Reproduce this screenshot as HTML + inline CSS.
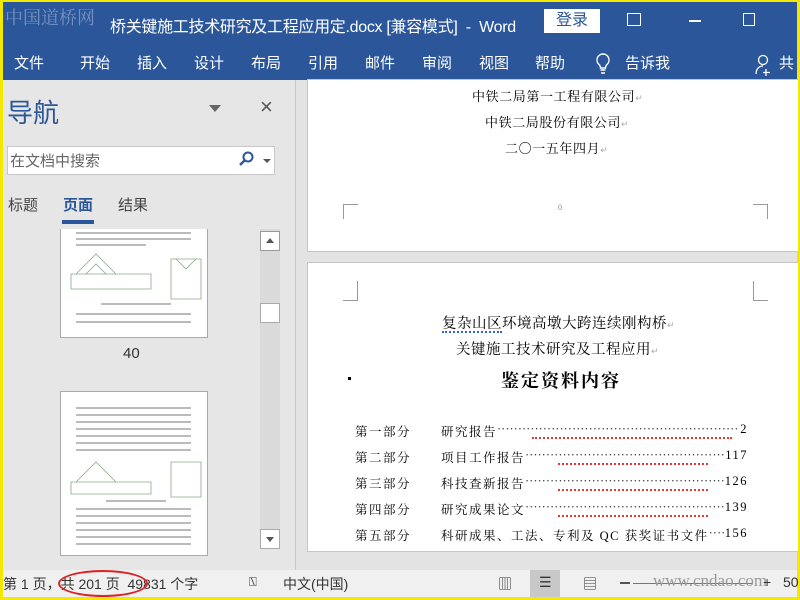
<!DOCTYPE html>
<html><head><meta charset="utf-8"><style>
*{margin:0;padding:0;box-sizing:border-box}
body{width:800px;height:600px;overflow:hidden;background:#f5e800;font-family:"Liberation Sans","Noto Sans CJK SC",sans-serif;position:relative}
.abs{position:absolute}
#title{left:3px;top:2px;width:794px;height:78px;background:#2b579a;color:#fff}
.t{position:absolute;font-size:17px;white-space:nowrap}
.nav{left:3px;top:80px;width:292px;height:490px;background:#e6e6e6}
.doc{left:295px;top:80px;width:502px;height:490px;background:#e3e3e3;border-left:1px solid #c8c8c8}
.page{position:absolute;background:#fff;left:11px;width:491px;border:1px solid #c6c6c6;border-right:none}
.serif{font-family:"Liberation Serif","Noto Serif CJK SC",serif;color:#000;position:absolute;white-space:nowrap;font-size:13px}
.status{left:3px;top:570px;width:794px;height:27px;background:#f0f0f0;font-size:14px;color:#333}
.st{position:absolute;top:4px;white-space:nowrap}
.wave{position:absolute;height:3px;border-bottom:2px dotted #e33}
.row{position:absolute;left:47px;width:393px;display:flex;font-family:"Liberation Serif","Noto Serif CJK SC",serif;font-size:12.5px;white-space:nowrap;letter-spacing:1.5px}
.row .a{width:86px}
.row .d{flex:1;overflow:hidden;letter-spacing:0;color:#333}
</style></head><body>
<div id="title" class="abs">
 <div class="t" style="left:2px;top:2px;color:#8aa0c8;font-size:18px;font-family:'Noto Serif CJK SC',serif;opacity:.8">中国道桥网</div>
 <div class="t" style="left:107px;top:11px;font-size:16px;letter-spacing:-.3px">桥关键施工技术研究及工程应用定.docx [兼容模式]&nbsp; - &nbsp;Word</div>
 <div class="abs" style="left:541px;top:7px;width:56px;height:24px;background:#fff;color:#2b579a;font-size:16px;text-align:center;line-height:24px">登录</div>
 <div class="abs" style="left:624px;top:11px;width:14px;height:13px;border:1.5px solid #fff"></div>
 <div class="abs" style="left:686px;top:18px;width:12px;height:1.5px;background:#fff"></div>
 <div class="abs" style="left:740px;top:11px;width:12px;height:13px;border:1.5px solid #fff"></div>
 <div class="t" style="left:11px;top:50px;font-size:15px">文件</div>
 <div class="t" style="left:77px;top:50px;font-size:15px">开始</div>
 <div class="t" style="left:134px;top:50px;font-size:15px">插入</div>
 <div class="t" style="left:191px;top:50px;font-size:15px">设计</div>
 <div class="t" style="left:248px;top:50px;font-size:15px">布局</div>
 <div class="t" style="left:305px;top:50px;font-size:15px">引用</div>
 <div class="t" style="left:362px;top:50px;font-size:15px">邮件</div>
 <div class="t" style="left:419px;top:50px;font-size:15px">审阅</div>
 <div class="t" style="left:476px;top:50px;font-size:15px">视图</div>
 <div class="t" style="left:532px;top:50px;font-size:15px">帮助</div>
 <svg class="abs" style="left:592px;top:50px" width="16" height="24"><path d="M8 2a6 6 0 0 0-4 10.5c1 1 1.5 2 1.5 3.5h5c0-1.5.5-2.5 1.5-3.5A6 6 0 0 0 8 2zM5.5 18h5M6 21h4" stroke="#fff" stroke-width="1.4" fill="none"/></svg>
 <div class="t" style="left:622px;top:50px;font-size:15px">告诉我</div>
 <svg class="abs" style="left:752px;top:52px" width="18" height="22"><circle cx="8" cy="6" r="4.5" stroke="#fff" stroke-width="1.3" fill="none"/><path d="M1 20c0-5 3-8 7-8M11 15v7M8 18.5h7" stroke="#fff" stroke-width="1.3" fill="none"/></svg>
 <div class="t" style="left:776px;top:50px;font-size:15px">共</div>
</div>
<div class="nav abs">
 <div class="t" style="left:4px;top:13px;font-size:26px;color:#2b579a">导航</div>
 <svg class="abs" style="left:206px;top:25px" width="12" height="8"><path d="M0 0h12L6 7z" fill="#666"/></svg>
 <div class="t" style="left:257px;top:14px;font-size:22px;color:#555">×</div>
 <div class="abs" style="left:4px;top:66px;width:268px;height:29px;background:#fff;border:1px solid #c8c8c8"></div>
 <div class="t" style="left:7px;top:70px;font-size:15px;color:#666">在文档中搜索</div>
 <svg class="abs" style="left:236px;top:71px" width="16" height="16"><circle cx="9" cy="6" r="4.5" stroke="#2b579a" stroke-width="2" fill="none"/><path d="M6 9l-5 5" stroke="#2b579a" stroke-width="2.4"/></svg>
 <svg class="abs" style="left:260px;top:79px" width="8" height="5"><path d="M0 0h8L4 4z" fill="#555"/></svg>
 <div class="t" style="left:5px;top:114px;font-size:15px;color:#444">标题</div>
 <div class="t" style="left:60px;top:114px;font-size:15px;color:#2b579a;font-weight:bold">页面</div>
 <div class="abs" style="left:59px;top:140px;width:32px;height:4px;background:#2b579a"></div>
 <div class="t" style="left:115px;top:114px;font-size:15px;color:#444">结果</div>
 <div class="abs" style="left:57px;top:149px;width:148px;height:109px;background:#fff;border:1px solid #aaa;border-top:none">
  <svg width="146" height="108"><g stroke="#8a8" fill="none" stroke-width=".8"><path d="M15 45l20-20 20 20M25 45l10-10 10 10M10 45h80v15H10zM110 30h30v40h-30zM115 30l10 10 10-10"/></g><g fill="#bbb"><rect x="15" y="3" width="115" height="2"/><rect x="15" y="9" width="115" height="2"/><rect x="15" y="15" width="70" height="2"/><rect x="40" y="74" width="70" height="2"/><rect x="15" y="84" width="115" height="2"/><rect x="15" y="92" width="115" height="2"/></g></svg>
 </div>
 <div class="t" style="left:120px;top:265px;font-size:15px;color:#333">40</div>
 <div class="abs" style="left:57px;top:311px;width:148px;height:165px;background:#fff;border:1px solid #aaa">
  <svg width="146" height="160"><g fill="#bbb"><rect x="15" y="15" width="115" height="2"/><rect x="15" y="22" width="115" height="2"/><rect x="15" y="29" width="115" height="2"/><rect x="15" y="36" width="115" height="2"/><rect x="15" y="43" width="115" height="2"/><rect x="15" y="50" width="115" height="2"/><rect x="15" y="57" width="115" height="2"/><rect x="45" y="108" width="60" height="2"/><rect x="15" y="116" width="115" height="2"/><rect x="15" y="123" width="115" height="2"/><rect x="15" y="130" width="115" height="2"/><rect x="15" y="137" width="115" height="2"/><rect x="15" y="144" width="115" height="2"/><rect x="15" y="151" width="115" height="2"/></g><g stroke="#8a8" fill="none" stroke-width=".8"><path d="M15 90l20-20 20 20M10 90h80v12H10zM110 70h30v35h-30z"/></g></svg>
 </div>
 <div class="abs" style="left:257px;top:149px;width:20px;height:320px;background:#dadada"></div>
 <div class="abs" style="left:257px;top:151px;width:20px;height:20px;background:#fff;border:1px solid #999"><svg width="18" height="18"><path d="M5 11h8L9 6z" fill="#555"/></svg></div>
 <div class="abs" style="left:257px;top:223px;width:20px;height:20px;background:#fff;border:1px solid #aaa"></div>
 <div class="abs" style="left:257px;top:449px;width:20px;height:20px;background:#fff;border:1px solid #aaa"><svg width="18" height="18"><path d="M5 7h8L9 12z" fill="#555"/></svg></div>
</div>
<div class="doc abs">
 <div class="page" style="top:-1px;height:173px">
  <div class="serif" style="left:164px;top:6px;letter-spacing:.6px">中铁二局第一工程有限公司<span style="color:#aaa;font-size:9px">↵</span></div>
  <div class="serif" style="left:177px;top:32px;letter-spacing:.6px">中铁二局股份有限公司<span style="color:#aaa;font-size:9px">↵</span></div>
  <div class="serif" style="left:197px;top:58px;letter-spacing:.6px">二〇一五年四月<span style="color:#aaa;font-size:9px">↵</span></div>
  <div class="abs" style="left:35px;top:124px;width:15px;height:15px;border-left:1px solid #999;border-top:1px solid #999"></div>
  <div class="abs" style="left:445px;top:124px;width:15px;height:15px;border-right:1px solid #999;border-top:1px solid #999"></div>
  <div class="serif" style="left:250px;top:123px;font-size:8px;color:#888">0</div>
 </div>
 <div class="page" style="top:182px;height:290px">
  <div class="abs" style="left:35px;top:18px;width:15px;height:20px;border-right:1px solid #999;border-bottom:1px solid #999"></div>
  <div class="abs" style="left:445px;top:18px;width:15px;height:20px;border-left:1px solid #999;border-bottom:1px solid #999"></div>
  <div class="serif" style="left:134px;top:49px;font-size:14.5px;letter-spacing:.5px">复杂山区环境高墩大跨连续刚构桥<span style="color:#aaa;font-size:9px">↵</span></div>
  <div class="abs" style="left:134px;top:67px;width:60px;height:3px;border-bottom:2px dotted #36c"></div>
  <div class="serif" style="left:148px;top:75px;font-size:14.5px;letter-spacing:.5px">关键施工技术研究及工程应用<span style="color:#aaa;font-size:9px">↵</span></div>
  <div class="abs" style="left:40px;top:114px;width:3px;height:3px;background:#000"></div>
  <div class="serif" style="left:193px;top:104px;font-size:18px;font-weight:bold;letter-spacing:2px">鉴定资料内容</div>
  <div class="row" style="top:159px"><span class="a">第一部分</span><span>研究报告</span><span class="d">··································································</span><span>2</span></div>
  <div class="row" style="top:185px"><span class="a">第二部分</span><span>项目工作报告</span><span class="d">··································································</span><span>117</span></div>
  <div class="row" style="top:211px"><span class="a">第三部分</span><span>科技查新报告</span><span class="d">··································································</span><span>126</span></div>
  <div class="row" style="top:237px"><span class="a">第四部分</span><span>研究成果论文</span><span class="d">··································································</span><span>139</span></div>
  <div class="row" style="top:263px"><span class="a">第五部分</span><span>科研成果、工法、专利及 QC 获奖证书文件</span><span class="d">··································································</span><span>156</span></div>
  <div class="wave" style="left:224px;top:173px;width:200px"></div>
  <div class="wave" style="left:250px;top:199px;width:150px"></div>
  <div class="wave" style="left:250px;top:225px;width:150px"></div>
  <div class="wave" style="left:250px;top:251px;width:150px"></div>
 </div>
</div>
<div class="status abs">
 <div class="st" style="left:0">第 1 页，共 201 页&nbsp; 49831 个字</div>
 <div class="abs" style="left:55px;top:0;width:90px;height:27px;border:2px solid #d22;border-radius:50%"></div>
 <div class="st" style="left:246px;font-size:13px">⍂</div>
 <div class="st" style="left:280px">中文(中国)</div>
 <div class="st" style="left:495px">▥</div>
 <div class="abs" style="left:527px;top:0;width:30px;height:27px;background:#c8c8c8"></div>
 <div class="st" style="left:536px">☰</div>
 <div class="st" style="left:580px">▤</div>
 <div class="abs" style="left:617px;top:12px;width:10px;height:2px;background:#555"></div>
 <div class="abs" style="left:630px;top:13px;width:120px;height:1px;background:#777"></div>
 <div class="st" style="left:650px;color:#999;font-family:'Liberation Serif',serif;font-size:17px;top:1px">www.cndao.com</div>
 <div class="st" style="left:760px">+</div>
 <div class="st" style="left:780px">50</div>
</div>
</body></html>
